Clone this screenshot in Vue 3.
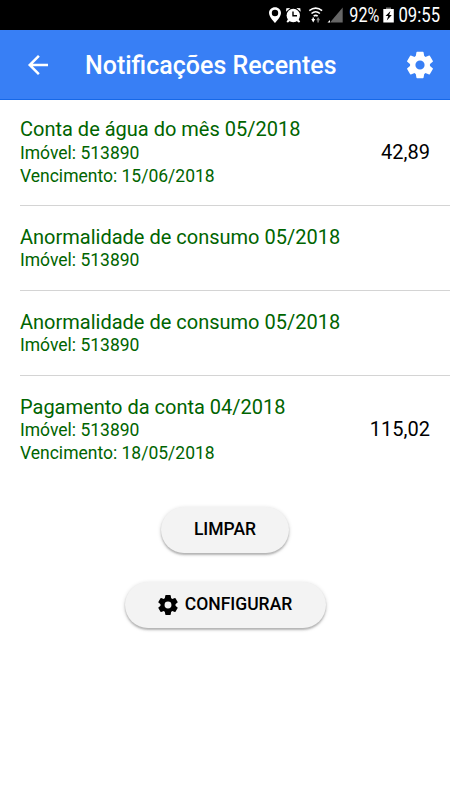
<script setup>
const angles = [0, 60, 120, 180, 240, 300]

const items = [
  { title: 'Conta de água do mês 05/2018', lines: ['Imóvel: 513890', 'Vencimento: 15/06/2018'], value: '42,89' },
  { title: 'Anormalidade de consumo 05/2018', lines: ['Imóvel: 513890'] },
  { title: 'Anormalidade de consumo 05/2018', lines: ['Imóvel: 513890'] },
  { title: 'Pagamento da conta 04/2018', lines: ['Imóvel: 513890', 'Vencimento: 18/05/2018'], value: '115,02' },
]
</script>

<template>
  <div class="screen">
    <div class="status">
      <svg width="190" height="30" viewBox="0 0 190 30">
        <path fill="#fff" fill-rule="evenodd" d="M15 7.300c-3.400 0-6 2.500-6 5.800 0 4 6 9.900 6 9.900s6-5.900 6-9.900c0-3.300-2.600-5.800-6-5.800zm0 2.500a3.200 3.200 0 1 1 0 6.400 3.200 3.200 0 0 1 0-6.400z" />
        <g fill="#fff">
          <circle cx="33.300" cy="15.500" r="6.700" />
          <path d="M26 11.700L26.300 8.300 30.300 8zM40.700 11.700L40.300 8.300 36.300 8zM28 19l-1.500 3 1.500.4 2.500-2zM38.600 19l1.600 3-1.600.4-2.500-2z" />
        </g>
        <path d="M33 11.500v4.300h4" fill="none" stroke="#000" stroke-width="1.400" />
        <g fill="none" stroke="#fff" stroke-width="1.600">
          <path d="M49.300 10.600q6.400-5 12.800 0M51.500 13.500q4.200-3.500 8.400 0M53.700 16.200q2-1.700 4 0" />
        </g>
        <path d="M51.300 19h1.200v-1.600h1.400V19h1.300l-2 3.500z" fill="#fff" />
        <path d="M56.200 20.300h1.200v2.200h1.400v-2.200h1.300l-2-3.300z" fill="#888" />
        <path d="M82.700 7.500v15H70z" fill="#666" />
        <path d="M70 20v2.500h-2.500z" fill="#fff" />
        <text x="89.300" y="22" textLength="30" lengthAdjust="spacingAndGlyphs">92%</text>
        <path fill="#777" d="M126 7.500h5V9h-5z" />
        <path fill="#fff" d="M123.300 9h10.500v13.500h-10.500z" />
        <path fill="#000" d="M130.500 11l-5 5h2.700l-1.400 4.500 5-5.500h-2.600z" />
        <text x="138.500" y="22" textLength="41.500" lengthAdjust="spacingAndGlyphs">09:55</text>
      </svg>
    </div>
    <header class="toolbar">
      <svg width="30" height="30" viewBox="0 0 512 512"><path fill="#fff" d="M427 234.625H167.296l119.702-119.702L256 85 85 256l171 171 29.922-29.924-118.626-119.701H427v-42.750z" /></svg>
      <h1>Notificações Recentes</h1>
      <svg class="gear" width="32" height="32" viewBox="-16 -16 32 32">
        <circle r="7.300" />
        <path v-for="a in angles" :key="a" :transform="`rotate(${a})`" d="M-4.400-8L-3.600-12.600Q-3.500-13.200-2.900-13.200H2.900Q3.500-13.200 3.600-12.600L4.400-8z" />
      </svg>
    </header>
    <main>
      <div v-for="(item, i) in items" :key="i" class="item">
        <div class="label">
          <h2>{{ item.title }}</h2>
          <p v-for="line in item.lines" :key="line">{{ line }}</p>
        </div>
        <span v-if="item.value" class="value">{{ item.value }}</span>
      </div>
      <div class="actions">
        <button class="clear"><span>LIMPAR</span></button>
        <button class="config">
          <svg class="gear" width="24" height="24" viewBox="-16 -16 32 32">
            <circle r="7.300" />
            <path v-for="a in angles" :key="a" :transform="`rotate(${a})`" d="M-4.400-8L-3.600-12.600Q-3.500-13.200-2.900-13.200H2.900Q3.500-13.200 3.600-12.600L4.400-8z" />
          </svg>
          <span>CONFIGURAR</span>
        </button>
      </div>
    </main>
  </div>
</template>

<style>
body { margin: 0; background: #fff; }
</style>

<style scoped>
.screen { width: 450px; height: 800px; overflow: hidden; background: #fff; font-family: Roboto, sans-serif; }
.status { height: 30px; background: #000; display: flex; justify-content: flex-end; }
.status text { font-size: 19.500px; fill: #fff; }
.toolbar { height: 70px; box-sizing: border-box; background: #387ff5; border-bottom: 1px solid #1668e8; display: flex; align-items: center; padding: 0 14px 0 23px; color: #fff; }
.toolbar h1 { flex: 1; margin: 0 0 0 32px; padding-top: 2px; font-size: 25px; line-height: 30px; font-weight: 500; white-space: nowrap; }
.gear path { fill: currentColor; }
.gear circle { fill: none; stroke: currentColor; stroke-width: 5.400; }
.item { box-sizing: border-box; height: 85px; margin-left: 20px; padding: 18px 20px 0 0; border-bottom: 1px solid #d4d4d4; display: flex; align-items: flex-start; justify-content: space-between; }
.item:first-child { height: 106px; padding-top: 16px; }
.item:nth-child(4) { height: 106px; border-bottom: 0; }
.label { color: #006400; white-space: nowrap; }
.label h2 { margin: 0; font-size: 20px; line-height: 26px; font-weight: 400; }
.item:not(:first-child) h2 { margin-bottom: -1px; }
.label p { margin: 0; font-size: 17.500px; line-height: 22.500px; }
.value { padding-top: 24px; font-size: 20px; line-height: 24px; color: #000; }
.item:nth-child(4) .value { padding-top: 23px; }
.actions { display: flex; flex-direction: column; align-items: center; gap: 29.500px; padding-top: 25px; }
button { height: 45.500px; border: 0; border-radius: 23px; background: #f3f3f3; box-shadow: 0 2px 2px rgba(0, 0, 0, .22), 0 1px 4px rgba(0, 0, 0, .16); font-family: inherit; font-size: 17.500px; font-weight: 500; color: #000; display: flex; align-items: center; justify-content: center; padding: 0; }
button span { line-height: 20px; padding-bottom: 1px; }
.clear { width: 128px; }
.config { width: 201px; gap: 5px; padding-right: 2px; }
</style>
